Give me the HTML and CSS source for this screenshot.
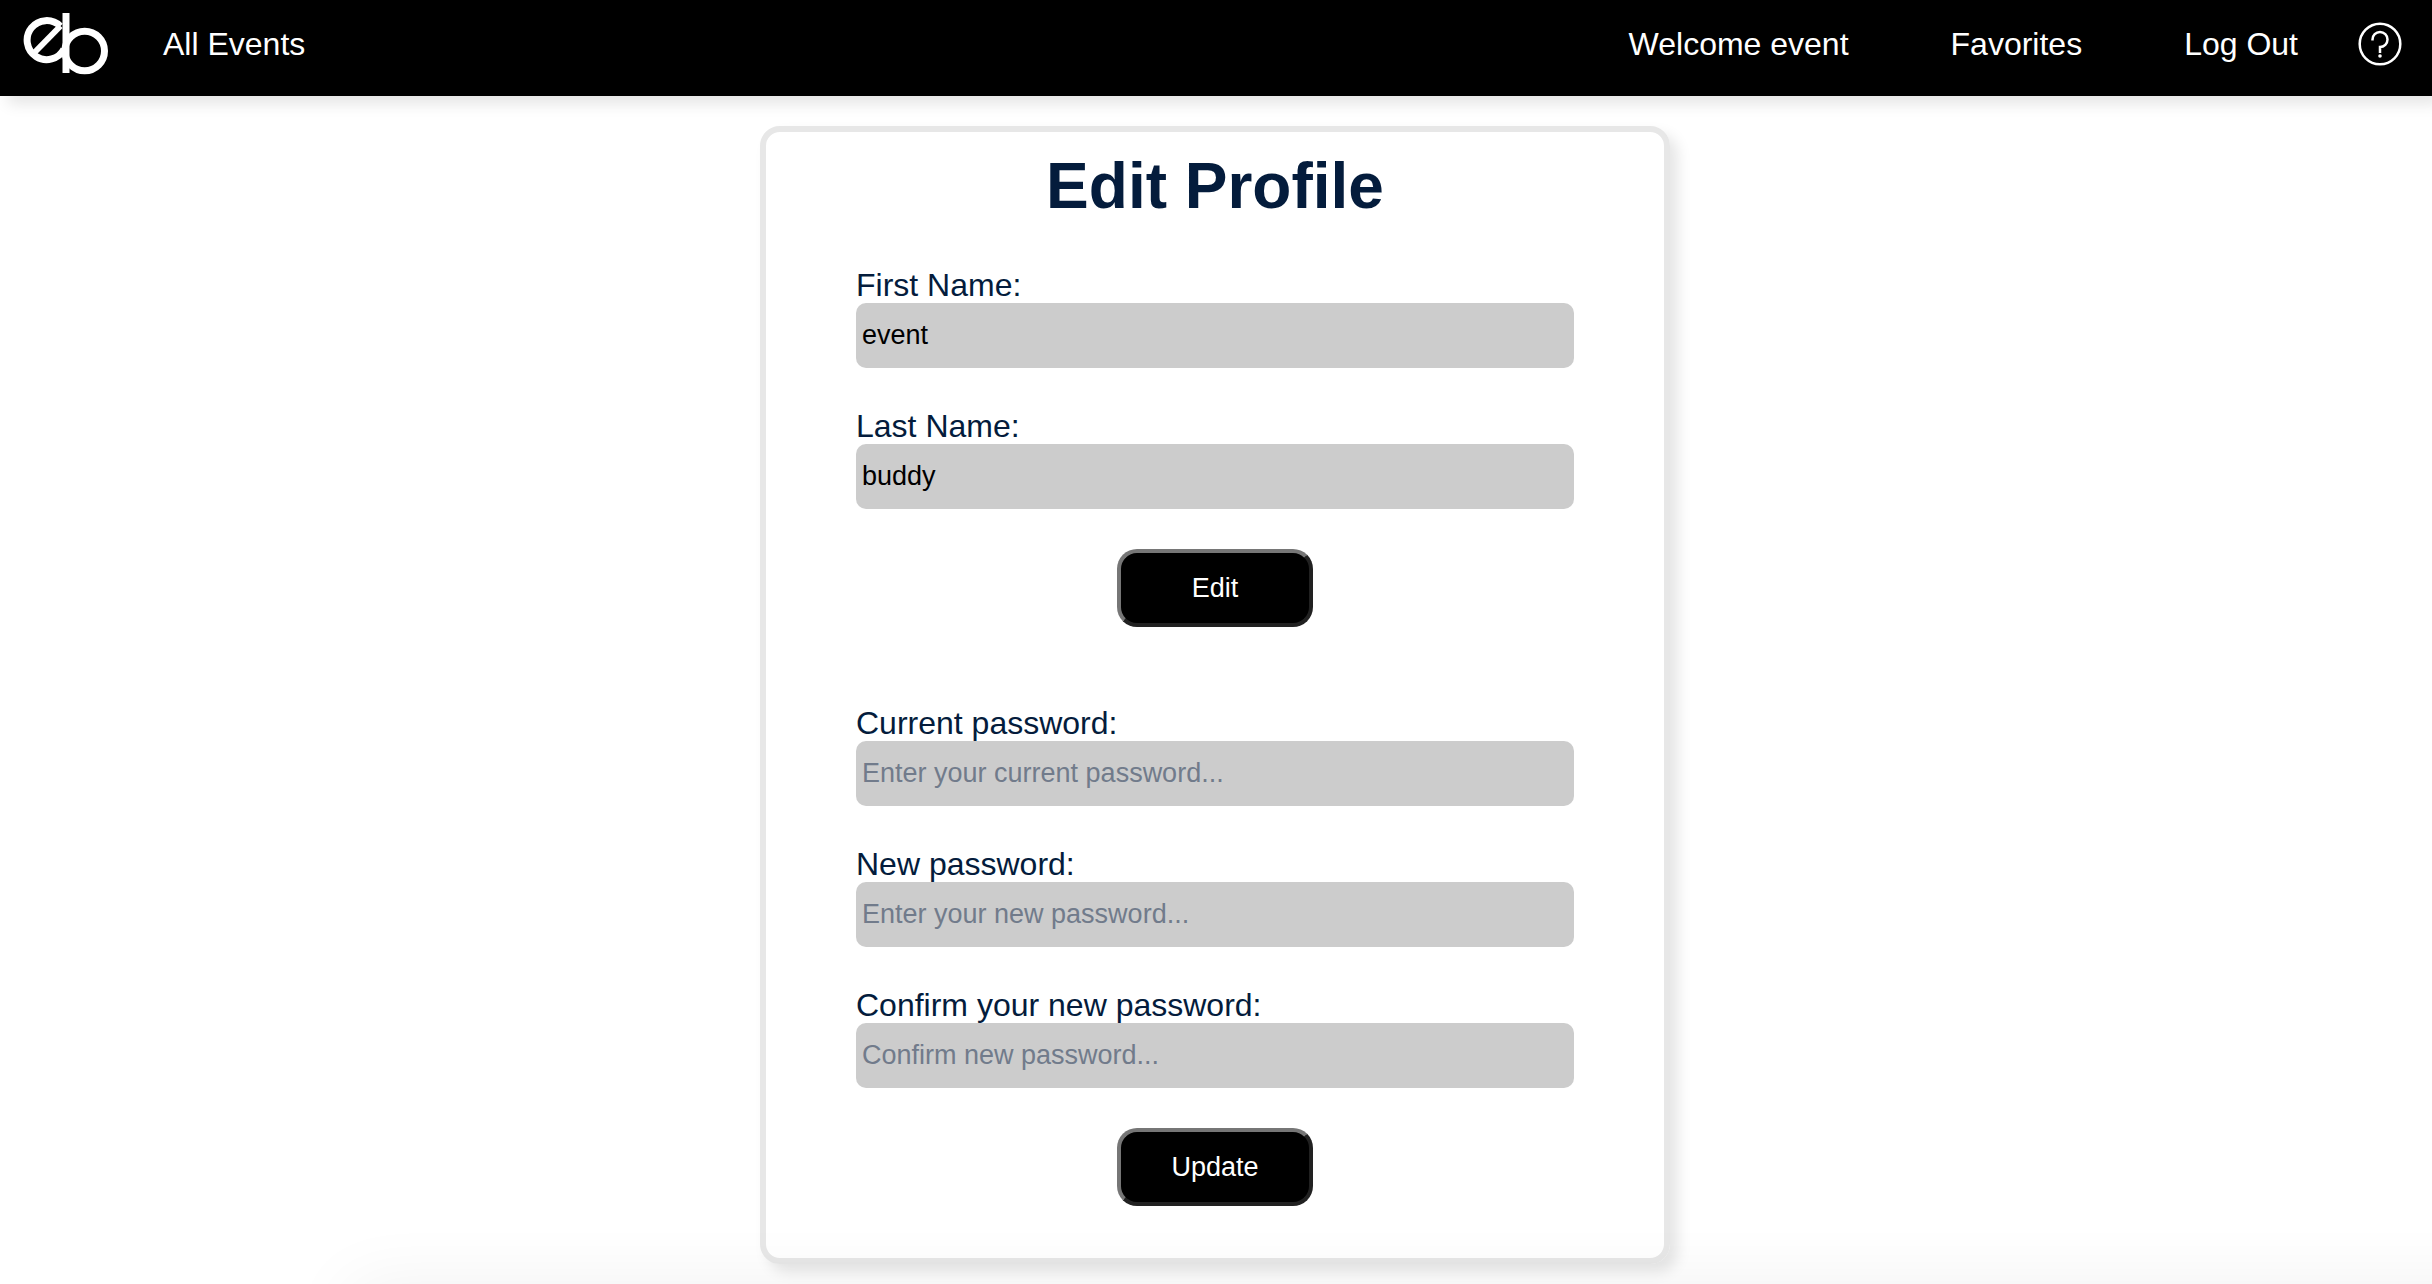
FILE: index.html
```html
<!DOCTYPE html>
<html lang="en">
<head>
<meta charset="utf-8">
<title>Edit Profile</title>
<link rel="stylesheet" href="styles.css">
</head>
<body>
<header class="nav">
  <a class="logo" href="#" aria-label="Home">
    <svg width="86" height="64" viewBox="0 0 86 64" fill="none" stroke="#fff" stroke-width="7">
      <path d="M41 37A19.500 19.500 0 1 1 37.300 14.200"/>
      <path d="M10 42 37.500 14" stroke-width="6"/>
      <path d="M43 1V61"/>
      <circle cx="61.700" cy="39" r="19.800"/>
    </svg>
  </a>
  <a class="nav-link" href="#">All Events</a>
  <nav class="nav-right">
    <a class="nav-link" href="#">Welcome event</a>
    <a class="nav-link" href="#">Favorites</a>
    <a class="nav-link" href="#">Log Out</a>
  </nav>
  <a class="help" href="#" aria-label="Help">
    <svg width="44" height="44" viewBox="0 0 44 44" fill="none" stroke="#fff" stroke-width="2.500">
      <circle cx="22" cy="22" r="20.300"/>
      <path d="M14.500 18.500V17.500A7.500 7.500 0 1 1 22 25V31"/>
      <circle cx="22" cy="34" r="1.800" fill="#fff" stroke="none"/>
    </svg>
  </a>
</header>
<main class="page">
  <section class="card">
    <h1 class="title">Edit Profile</h1>
    <form class="form">
      <div class="field"><label for="first">First Name:</label><input id="first" type="text" value="event"></div>
      <div class="field"><label for="last">Last Name:</label><input id="last" type="text" value="buddy"></div>
      <button class="button" type="button">Edit</button>
    </form>
    <form class="form">
      <div class="field"><label for="current">Current password:</label><input id="current" type="password" placeholder="Enter your current password..."></div>
      <div class="field"><label for="new">New password:</label><input id="new" type="password" placeholder="Enter your new password..."></div>
      <div class="field"><label for="confirm">Confirm your new password:</label><input id="confirm" type="password" placeholder="Confirm new password..."></div>
      <button class="button" type="button">Update</button>
    </form>
  </section>
</main>
<div class="bottom-shade"></div>
</body>
</html>
```
FILE: styles.css
```css
* { box-sizing: border-box; }

body {
  margin: 0;
  background: #fff;
  color: #041c3c;
  font-family: "Liberation Sans", Arial, sans-serif;
  font-size: 32px;
  line-height: 36px;
}

.nav {
  display: flex;
  align-items: center;
  height: 96px;
  padding: 0 30px 8px 23px;
  background: #000;
  box-shadow: 8px 8px 14px rgba(0, 0, 0, 0.1);
}

.logo, .help { display: flex; }
.logo { flex: none; margin-right: 54px; }
.nav-link { color: #fff; text-decoration: none; }
.nav-right { display: flex; gap: 102px; margin: 0 60px 0 auto; }

.page { padding: 30px 22px 20px 20px; }

.card {
  max-width: 910px;
  margin: 0 auto;
  padding: 17px 90px 52px;
  border: 6px solid #e7e7e7;
  border-radius: 20px;
  box-shadow: 8px 8px 14px rgba(0, 0, 0, 0.1);
}

.title {
  margin: 0 0 44px;
  font-size: 64px;
  line-height: 74px;
  text-align: center;
}

.form { display: flex; flex-direction: column; gap: 40px; }
.form + .form { margin-top: 78px; }
.field { display: flex; flex-direction: column; }

.field input {
  height: 65px;
  padding: 0 6px;
  border: 0;
  border-radius: 10px;
  background: #ccc;
  color: #000;
  font: 27px "Liberation Sans", Arial, sans-serif;
}

.field input::placeholder { color: #717b8b; }

.button {
  align-self: center;
  width: 196px;
  height: 78px;
  border: 4px solid;
  border-color: #767676 #212121 #212121 #767676;
  border-radius: 20px;
  background: #000;
  color: #fff;
  font: 27px "Liberation Sans", Arial, sans-serif;
}

/* Soft shade rising from the lower edge of the window */
.bottom-shade {
  position: fixed;
  top: 100%;
  left: 350px;
  right: -100px;
  height: 120px;
  box-shadow: 0 0 70px rgba(0, 0, 0, 0.06);
  pointer-events: none;
}
```
